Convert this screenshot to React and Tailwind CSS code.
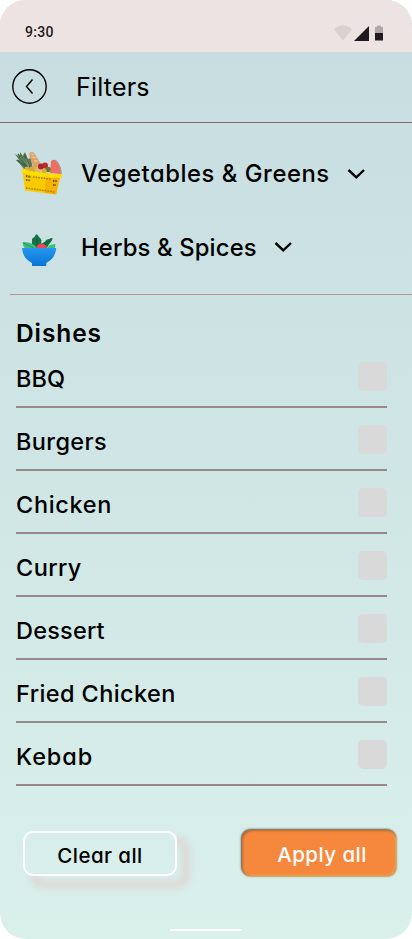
import React from "react";

const dishes = [
  ["BBQ", "tracking-[0.1px]"],
  ["Burgers", "tracking-[0.4px]"],
  ["Chicken", "tracking-[0.65px]"],
  ["Curry", "tracking-[0.4px]"],
  ["Dessert", "tracking-[0.2px]"],
  ["Fried Chicken", "tracking-[0.4px]"],
  ["Kebab", "tracking-[0.9px]"],
];

function StatusBar() {
  return (
    <div className="flex h-[52px] shrink-0 items-start justify-between bg-[#ede3e2] pl-[25px] pr-7 pt-6">
      <span className="font-['Roboto'] text-[14px] font-medium leading-4 tracking-[0.3px] text-[#1d1b20]">9:30</span>
      <svg width="50" height="18" viewBox="334 24 50 18">
        <path d="M334 29.2Q343 21.4 352 29.2L343 40.5Z" fill="#d9d0cf" />
        <path d="M354 41L369 26V41Z" fill="#1d1b20" />
        <path d="M375 27h2v-1.500h4v1.500h2v6h-8Z" fill="#b0a7a8" />
        <path d="M375 33h8v7.500h-8Z" fill="#1d1b20" />
      </svg>
    </div>
  );
}

function Basket() {
  return (
    <svg width="50" height="48" viewBox="14 150 50 48">
      <path d="M24 169L19 163l-3-3 3 0-4-6 5 3 0-5 3 4 2-4 3 7 3-1 2 12Z" fill="#5d7b59" />
      <path d="M18 154l10 14M24 154l6 13M17 160l11 8" stroke="#3a6242" strokeWidth="1.300" />
      <path d="M20 157l9 10M26 159l3 7" stroke="#91a879" strokeWidth=".7" />
      <path d="M29 154q2-4 5-1l7 11-1 6-6-1Z" fill="#dea267" />
      <path d="M31 154l3 1M32 157l4 1M34 161l4 0" stroke="#f3d2a2" strokeWidth="1" />
      <path d="M50 173L51 161q3-2 5-1 5 4 5 14Z" fill="#ef6f66" />
      <path d="M55 160q6 5 6.500 14" fill="none" stroke="#8fb087" strokeWidth="1" />
      <circle cx="27" cy="169" r="2.500" fill="#d6b04e" />
      <circle cx="32" cy="170" r="3.500" fill="#d6a73e" />
      <circle cx="38" cy="170" r="3" fill="#e1bc61" />
      <circle cx="41" cy="166.500" r="3" fill="#a9252c" />
      <circle cx="45" cy="165.500" r="3" fill="#bd2830" />
      <circle cx="48" cy="169.500" r="2.800" fill="#71762f" />
      <circle cx="44" cy="171" r="2.500" fill="#dba940" />
      <path d="M22.500 170l38.500 5-5 19.500-31-4Z" fill="#f9ca00" />
      <path d="M46 175l14 1-4 18.500-11-1.500Z" fill="#f5b300" />
      <path d="M21.500 168.500q20 6.500 41 5.500l-.5 3.500q-20 1.500-40-5Z" fill="#ffdf00" />
      <path d="M26 176l5 1M26 180l4 .5M53 181l4 0M53 185l3 0" stroke="#775617" strokeWidth="1.800" strokeDasharray="1.500 .8" />
      <path d="M33 177l18 2M26 188l29 4" stroke="#a87900" strokeWidth="1.500" strokeDasharray="1.500 1.200" />
    </svg>
  );
}

function SaladBowl() {
  return (
    <svg width="36" height="34" viewBox="21 233 36 34">
      <defs>
        <linearGradient id="bowl" x1="0" y1="0" x2="0" y2="1">
          <stop stopColor="#2696ef" />
          <stop offset="1" stopColor="#0873d5" />
        </linearGradient>
      </defs>
      <path d="M32 249V239q1-1.500 2.500-2 2-5.500 4.500 0 2 1 2.500 3.500l-.5 3.500 4-2.500q1-2.500 4-2.500 4-2 3.500 0-.5 2-2.500 4l-4 6Z" fill="#167344" />
      <path d="M37 238v9M51 239.500l-8 7" stroke="#0b5932" strokeWidth="1" />
      <path d="M22.500 242q11-.5 15 7h-12q-3-3-3-7Z" fill="#3abd7c" />
      <path d="M55.500 244q-8 0-9 6h8Z" fill="#3abd7c" />
      <path d="M23.500 243l10 5" stroke="#16975e" strokeWidth=".8" />
      <circle cx="41.500" cy="249" r="5.500" fill="#ed465b" />
      <path d="M22 248h34.200q-.5 10-10 15v3H32v-3q-9.500-5-10-15Z" fill="url(#bowl)" />
    </svg>
  );
}

function Chevron() {
  return (
    <svg width="18" height="12" viewBox="0 0 18 12" fill="none" stroke="#000" strokeWidth="2.400">
      <path d="M1.500 2L9.300 9.300L17 2" />
    </svg>
  );
}

export default function App() {
  return (
    <div className="h-[939px] w-[412px] bg-white">
      <div className="flex h-full flex-col overflow-hidden rounded-[26px] bg-linear-to-b from-[#c6dce0] to-[#d9f0eb] font-['Inter',sans-serif] text-black [font-feature-settings:'cv11']">
        <StatusBar />
        <header className="flex h-[71px] shrink-0 items-center border-b border-[#83696a] pl-3">
          <svg className="mb-[2px]" width="35" height="35" viewBox="0 0 35 35" fill="none" stroke="#000" strokeWidth="1.400">
            <circle cx="17.500" cy="17.500" r="16.700" />
            <path d="M20.500 10.500L14.500 17.500L20.500 24.500" />
          </svg>
          <h1 className="ml-[29px] whitespace-nowrap text-[25px] leading-9 tracking-[0.2px]">Filters</h1>
        </header>
        <section className="ml-[10px] h-[172px] shrink-0 border-b border-[#b59494]">
          <div className="flex h-[88px] items-center pt-[13px]">
            <div className="ml-1 w-[67px]"><Basket /></div>
            <span className="w-[248px] whitespace-nowrap text-[23.800px] font-medium tracking-[0.55px]">Vegetables &amp; Greens</span>
            <span className="ml-[18px]"><Chevron /></span>
          </div>
          <div className="flex h-[72px] items-center">
            <div className="ml-[11px] mt-[6px] w-[60px]"><SaladBowl /></div>
            <span className="mt-[2px] w-[175px] whitespace-nowrap text-[23.800px] font-medium tracking-[0.15px]">Herbs &amp; Spices</span>
            <span className="ml-[18px]"><Chevron /></span>
          </div>
        </section>
        <section className="ml-4 w-[370.500px] shrink-0 pt-5">
          <h2 className="h-[30px] text-[24.500px] font-semibold leading-9 tracking-[0.9px]">Dishes</h2>
          {dishes.map(([name, tracking]) => (
            <div key={name} className="flex h-[63px] items-end justify-between border-b-2 border-[#988889]">
              <span className={"mb-[13px] whitespace-nowrap text-[23.500px] font-medium leading-[28px] " + tracking}>{name}</span>
              <span className="mb-[15px] size-[29px] rounded-[5px] bg-[#d9d9d9]" />
            </div>
          ))}
        </section>
        <footer className="mt-[44px] flex shrink-0 justify-between pl-[23px] pr-4">
          <div className="relative mt-px h-[45px] w-[154px]">
            {/* Shadow cast by the outline alone, kept out of the button's own area */}
            <div className="absolute left-0 top-0 h-[70px] w-[180px] [clip-path:polygon(154px_0,180px_0,180px_70px,0_70px,0_45px,146px_45px,151px_43px,154px_37px)]">
              <div className="absolute left-[8px] top-[6px] h-[51px] w-[158px] rounded-[12px] border-[7px] border-[#dfd5d3] blur-[3.500px]" />
            </div>
            <button className="relative h-[45px] w-[154px] rounded-[10px] border-2 border-white pt-[6px] text-[20.500px] font-medium tracking-[0.45px]">Clear all</button>
          </div>
          <button className="h-[46px] w-[154px] rounded-[9px] bg-[#f6883d] pl-[6px] pt-[4px] text-[20.500px] font-medium tracking-[0.45px] text-white shadow-[inset_1px_1px_2px_#a0623acc,inset_-1px_-1px_2px_#e9a850,-0.500px_-0.500px_2px_#6b5a48,0.500px_0.500px_2px_#e3c384]">Apply all</button>
        </footer>
        <div className="mx-auto mt-auto mb-2 h-[2px] w-[72px] bg-white" />
      </div>
    </div>
  );
}
